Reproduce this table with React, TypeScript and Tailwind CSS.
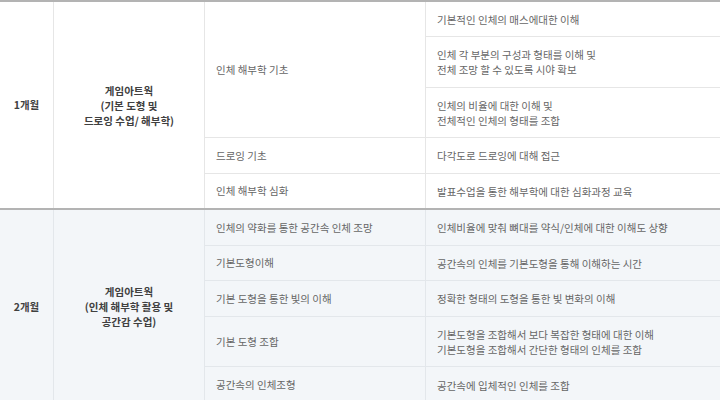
import React from "react";

function Cell3({
  children,
  span3,
  last,
  line,
}: {
  children: React.ReactNode;
  span3?: boolean;
  last?: boolean;
  line: string;
}) {
  return (
    <div
      className={`col-start-3 flex items-center pl-[11px] border-r ${line} ${last ? "" : "border-b"} ${span3 ? "row-span-3" : ""} text-[#666666]`}
    >
      {children}
    </div>
  );
}

function Cell4({ lines, last, line }: { lines: string[]; last?: boolean; line: string }) {
  return (
    <div
      className={`col-start-4 flex flex-col justify-center pl-[11px] ${last ? "" : "border-b"} ${line} text-[#666666] leading-[15px]`}
    >
      {lines.map((t, j) => (
        <div key={j}>{t}</div>
      ))}
    </div>
  );
}

function Head({ month, title, line }: { month: string; title: string[]; line: string }) {
  return (
    <>
      <div
        className={`col-start-1 row-span-5 flex items-center justify-center border-r ${line} font-bold text-[#404040]`}
      >
        {month}
      </div>
      <div
        className={`col-start-2 row-span-5 flex flex-col items-center justify-center border-r ${line} font-bold text-[#404040] leading-[15px] text-center`}
      >
        {title.map((t, i) => (
          <div key={i}>{t}</div>
        ))}
      </div>
    </>
  );
}

export default function App() {
  const l1 = "border-[#e6e6e6]";
  const l2 = "border-[#e3e7eb]";
  return (
    <div className="w-[720px] h-[400px] overflow-hidden bg-white text-[10.5px] font-['Noto_Sans_CJK_KR','Noto_Sans',sans-serif]">
      <div className="border-t-2 border-[#b3b3b3]">
        <div className="grid grid-cols-[54px_151px_221px_1fr] grid-rows-[35px_51px_50px_36px_34px] bg-white">
          <Head month="1개월" title={["게임아트웍", "(기본 도형 및", "드로잉 수업/ 해부학)"]} line={l1} />
          <Cell3 span3 line={l1}>인체 해부학 기초</Cell3>
          <Cell4 line={l1} lines={["기본적인 인체의 매스에대한 이해"]} />
          <Cell4 line={l1} lines={["인체 각 부분의 구성과 형태를 이해 및", "전체 조망 할 수 있도록 시야 확보"]} />
          <Cell4 line={l1} lines={["인체의 비율에 대한 이해 및", "전체적인 인체의 형태를 조합"]} />
          <Cell3 line={l1}>드로잉 기초</Cell3>
          <Cell4 line={l1} lines={["다각도로 드로잉에 대해 접근"]} />
          <Cell3 line={l1} last>인체 해부학 심화</Cell3>
          <Cell4 line={l1} last lines={["발표수업을 통한 해부학에 대한 심화과정 교육"]} />
        </div>
      </div>
      <div className="border-t-2 border-[#b3b3b3]">
        <div className="grid grid-cols-[54px_151px_221px_1fr] grid-rows-[36px_35px_36px_50px_36px] bg-[#f3f6f9]">
          <Head month="2개월" title={["게임아트웍", "(인체 해부학 활용 및", "공간감 수업)"]} line={l2} />
          <Cell3 line={l2}>인체의 약화를 통한 공간속 인체 조망</Cell3>
          <Cell4 line={l2} lines={["인체비율에 맞춰 뼈대를 약식/인체에 대한 이해도 상향"]} />
          <Cell3 line={l2}>기본도형이해</Cell3>
          <Cell4 line={l2} lines={["공간속의 인체를 기본도형을 통해 이해하는 시간"]} />
          <Cell3 line={l2}>기본 도형을 통한 빛의 이해</Cell3>
          <Cell4 line={l2} lines={["정확한 형태의 도형을 통한 빛 변화의 이해"]} />
          <Cell3 line={l2}>기본 도형 조합</Cell3>
          <Cell4
            line={l2}
            lines={["기본도형을 조합해서 보다 복잡한 형태에 대한 이해", "기본도형을 조합해서 간단한 형태의 인체를 조합"]}
          />
          <Cell3 line={l2} last>공간속의 인체조형</Cell3>
          <Cell4 line={l2} last lines={["공간속에 입체적인 인체를 조합"]} />
        </div>
      </div>
    </div>
  );
}
